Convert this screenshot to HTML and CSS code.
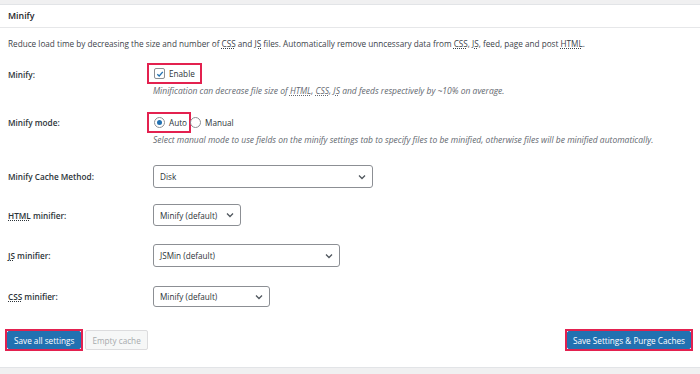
FILE: index.html
```html
<!DOCTYPE html>
<html lang="en">

<head>
  <meta charset="UTF-8">
  <meta name="viewport" content="width=device-width, initial-scale=1.0">
  <title>Minify Settings</title>
  <link rel="stylesheet" href="styles.css">
</head>

<body>

  <div class="panel">
    <h2 class="panel-title">Minify</h2>

    <div class="panel-body">
      <p class="intro">Reduce load time by decreasing the size and number of <abbr>CSS</abbr> and <abbr>JS</abbr> files. Automatically remove unncessary data from <abbr>CSS</abbr>, <abbr>JS</abbr>, feed, page and post <abbr>HTML</abbr>.</p>

      <!-- Minify enable -->
      <div class="row row-enable">
        <div class="label">Minify:</div>
        <div class="control">
          <label class="highlight">
            <span class="checkbox">
              <svg width="8" height="8" viewBox="0 0 8 8"><path d="M1.3 4.2 L3.2 6 L6.8 1.8" fill="none" stroke="#2271b1" stroke-width="1.3"/></svg>
            </span>
            Enable
          </label>
        </div>
      </div>
      <p class="desc">Minification can decrease file size of <abbr>HTML</abbr>, <abbr>CSS</abbr>, <abbr>JS</abbr> and feeds respectively by ~10% on average.</p>

      <!-- Minify mode -->
      <div class="row row-mode">
        <div class="label">Minify mode:</div>
        <div class="control">
          <label class="highlight">
            <span class="radio checked"></span>
            Auto
          </label>
          <label class="option">
            <span class="radio"></span>
            Manual
          </label>
        </div>
      </div>
      <p class="desc">Select manual mode to use fields on the minify settings tab to specify files to be minified, otherwise files will be minified automatically.</p>

      <!-- Cache method -->
      <div class="row row-cache">
        <div class="label">Minify Cache Method:</div>
        <div class="control">
          <div class="select select-wide">
            <span>Disk</span>
            <svg width="8" height="6" viewBox="0 0 8 6"><path d="M1 1.5 L4 4.5 L7 1.5" fill="none" stroke="#50575e" stroke-width="1.3"/></svg>
          </div>
        </div>
      </div>

      <div class="row row-html">
        <div class="label"><abbr>HTML</abbr> minifier:</div>
        <div class="control">
          <div class="select select-html">
            <span>Minify (default)</span>
            <svg width="8" height="6" viewBox="0 0 8 6"><path d="M1 1.5 L4 4.5 L7 1.5" fill="none" stroke="#50575e" stroke-width="1.3"/></svg>
          </div>
        </div>
      </div>

      <div class="row row-js">
        <div class="label"><abbr>JS</abbr> minifier:</div>
        <div class="control">
          <div class="select select-js">
            <span>JSMin (default)</span>
            <svg width="8" height="6" viewBox="0 0 8 6"><path d="M1 1.5 L4 4.5 L7 1.5" fill="none" stroke="#50575e" stroke-width="1.3"/></svg>
          </div>
        </div>
      </div>

      <div class="row row-css">
        <div class="label"><abbr>CSS</abbr> minifier:</div>
        <div class="control">
          <div class="select select-css">
            <span>Minify (default)</span>
            <svg width="8" height="6" viewBox="0 0 8 6"><path d="M1 1.5 L4 4.5 L7 1.5" fill="none" stroke="#50575e" stroke-width="1.3"/></svg>
          </div>
        </div>
      </div>

      <!-- Actions -->
      <div class="actions">
        <div class="actions-left">
          <span class="btn-outline"><button class="btn btn-primary">Save all settings</button></span>
          <button class="btn btn-disabled">Empty cache</button>
        </div>
        <span class="btn-outline"><button class="btn btn-primary btn-purge">Save Settings &amp; Purge Caches</button></span>
      </div>
    </div>
  </div>

</body>

</html>
```

FILE: styles.css
```css
/* Global Styles */
body {
  margin: 0;
  padding: 0;
  background-color: #f0f0f1;
  font-family: "Open Sans", "Noto Sans", sans-serif;
  font-size: 8.2px;
  color: #2c3338;
}

abbr {
  text-decoration: underline dotted;
  text-underline-offset: 1px;
}

.panel {
  margin-top: 4px;
  height: 362px;
  background-color: white;
  border-top: 1px solid #e2e4e7;
  border-bottom: 1px solid #e2e4e7;
}

.panel-title {
  margin: 0;
  height: 22px;
  line-height: 22px;
  padding-left: 8px;
  font-size: 8.8px;
  font-weight: 600;
  color: #1d2327;
  border-bottom: 1px solid #e6e7e9;
}

.panel-body {
  padding: 0 7px 0 8px;
}

.intro {
  margin: 10px 0 0;
  line-height: 12px;
  color: #3c434a;
}

/* Setting rows */
.row {
  display: flex;
  align-items: center;
}

.label {
  width: 145px;
  font-weight: 600;
  color: #2c3338;
}

.control {
  display: flex;
  align-items: center;
}

.row-enable { margin-top: 13px; }
.row-mode { margin-top: 15px; }
.row-cache { margin-top: 19px; }
.row-html { margin-top: 16px; }
.row-js { margin-top: 18px; }
.row-css { margin-top: 19px; }

.row-enable .label { margin-top: 2px; }

.desc {
  margin: 1px 0 0 145px;
  line-height: 12px;
  font-size: 8.5px;
  font-style: italic;
  color: #646970;
}

/* Checkbox / radio highlighted with a red box */
.highlight,
.option {
  display: flex;
  align-items: center;
  gap: 4px;
  height: 17px;
  color: #2c3338;
}

.highlight {
  margin-left: -6px;
  padding: 0 5px;
  border: 2px solid #e3214f;
}

.row-mode .highlight {
  padding-right: 2px;
}

.option {
  margin-left: -1px;
}

.checkbox {
  display: inline-flex;
  align-items: center;
  justify-content: center;
  width: 9px;
  height: 9px;
  border: 1px solid #8c8f94;
  border-radius: 2px;
}

.radio {
  display: inline-block;
  position: relative;
  width: 9px;
  height: 9px;
  border: 1px solid #8c8f94;
  border-radius: 50%;
}

.radio.checked::after {
  content: "";
  position: absolute;
  left: 2px;
  top: 2px;
  width: 5px;
  height: 5px;
  border-radius: 50%;
  background-color: #2271b1;
}

/* Select boxes */
.select {
  display: flex;
  align-items: center;
  justify-content: space-between;
  box-sizing: border-box;
  padding: 0 6px 0 6px;
  border: 1px solid #8c8f94;
  border-radius: 3px;
  color: #2c3338;
  background-color: white;
}

.select-wide { width: 220px; height: 23px; }
.select-html { width: 88px; height: 22px; }
.select-js { width: 187px; height: 23px; }
.select-css { width: 117px; height: 21px; }

/* Buttons */
.actions {
  display: flex;
  justify-content: space-between;
  align-items: center;
  margin: 22px 0 0 -3px;
}

.actions-left {
  display: flex;
  align-items: center;
  gap: 2px;
}

.btn-outline {
  display: inline-flex;
  border: 2px solid #e3214f;
}

.btn {
  font-family: inherit;
  font-size: 8.2px;
  height: 18px;
  padding: 0 6px;
  border-radius: 2px;
  cursor: pointer;
}

.btn-primary {
  background-color: #2271b1;
  border: 1px solid #2271b1;
  color: white;
}

.btn-purge {
  padding: 0 5px;
}

.btn-disabled {
  height: 20px;
  background-color: #f6f7f7;
  border: 1px solid #dcdcde;
  color: #a7aaad;
}
```
